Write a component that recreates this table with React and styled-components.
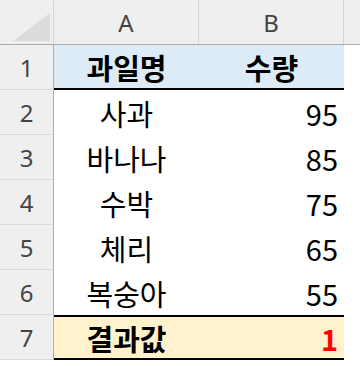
import React from 'react';
import styled, { createGlobalStyle } from 'styled-components';

const GlobalStyle = createGlobalStyle`
  html, body {
    margin: 0;
    padding: 0;
    background: #ffffff;
  }
  body {
    font-family: "Noto Sans", "Noto Sans CJK KR", sans-serif;
  }
`;

const rows = [
  { name: '사과', qty: 95 },
  { name: '바나나', qty: 85 },
  { name: '수박', qty: 75 },
  { name: '체리', qty: 65 },
  { name: '복숭아', qty: 55 }
];

const App = () => (
  <>
    <GlobalStyle />
    <Sheet>
      <HeaderRow>
        <Corner>
          <svg width="53" height="44" viewBox="0 0 53 44">
            <polygon points="50,13 50,41 13,41" fill="#dcdcdc" />
          </svg>
        </Corner>
        <ColHead>A</ColHead>
        <ColHead>B</ColHead>
        <ColHead $rest />
      </HeaderRow>

      <Row>
        <RowNum>1</RowNum>
        <Cell $bg="#ddebf7" $bottom $bold $align="center">과일명</Cell>
        <Cell $bg="#ddebf7" $bottom $bold $align="center">수량</Cell>
        <Filler />
      </Row>

      {rows.map((r, i) => (
        <Row key={r.name}>
          <RowNum>{i + 2}</RowNum>
          <Cell $align="center">{r.name}</Cell>
          <Cell $align="flex-end">{r.qty}</Cell>
          <Filler />
        </Row>
      ))}

      <Row>
        <RowNum>7</RowNum>
        <Cell $bg="#fff2cc" $top $bottom $bold $align="center">결과값</Cell>
        <Cell $bg="#fff2cc" $top $bottom $bold $align="flex-end" $color="#ff0000">1</Cell>
        <Filler />
      </Row>
    </Sheet>
  </>
);

const Sheet = styled.div`
  display: flex;
  flex-direction: column;
  width: 360px;
  height: 366px;
  overflow: hidden;
`;

const HeaderRow = styled.div`
  display: flex;
  height: 45px;
  background: #efefef;
  border-bottom: 1px solid #ababab;
  box-sizing: border-box;
`;

const Corner = styled.div`
  width: 53px;
  flex: none;
  border-right: 1px solid #d4d4d4;
  & svg {
    display: block;
  }
`;

const ColHead = styled.div`
  width: ${p => (p.$rest ? 'auto' : '145px')};
  flex: ${p => (p.$rest ? '1' : 'none')};
  box-sizing: border-box;
  border-right: ${p => (p.$rest ? 'none' : '1px solid #d4d4d4')};
  display: flex;
  align-items: center;
  justify-content: center;
  font-size: 24px;
  color: #444444;
`;

const Row = styled.div`
  display: flex;
  height: 45px;
  flex: none;
`;

const RowNum = styled.div`
  width: 54px;
  flex: none;
  box-sizing: border-box;
  background: #efefef;
  border-right: 1px solid #b0b0b0;
  border-bottom: 1px solid #d9d9d9;
  display: flex;
  align-items: center;
  justify-content: center;
  font-size: 24px;
  color: #444444;
`;

const Cell = styled.div`
  width: 145px;
  flex: none;
  box-sizing: border-box;
  background: ${p => p.$bg || '#ffffff'};
  border-top: ${p => (p.$top ? '2px solid #000' : 'none')};
  border-bottom: ${p => (p.$bottom ? '2px solid #000' : 'none')};
  display: flex;
  align-items: center;
  justify-content: ${p => p.$align};
  padding: 0 6px;
  font-family: "Noto Sans CJK KR", sans-serif;
  font-size: 29px;
  font-weight: ${p => (p.$bold ? 700 : 400)};
  color: ${p => p.$color || '#000000'};
`;

const Filler = styled.div`
  flex: 1;
`;

export default App;
